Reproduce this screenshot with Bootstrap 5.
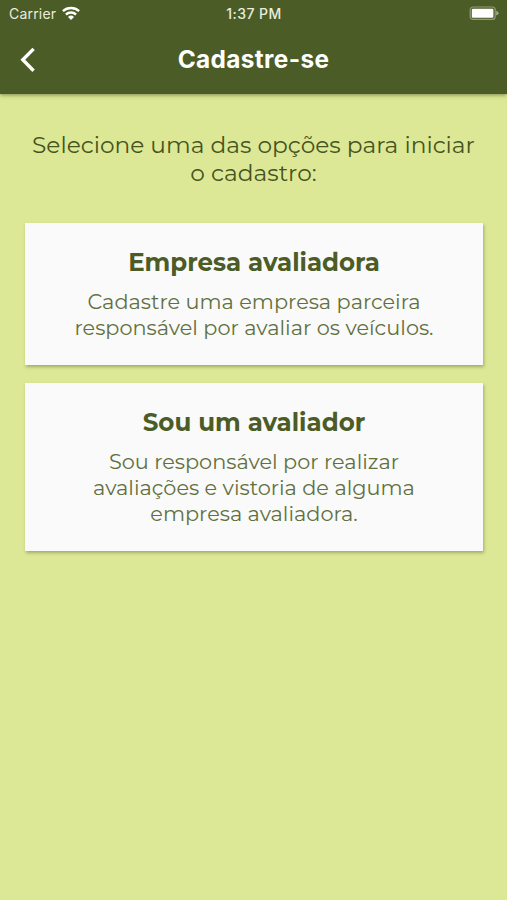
<!DOCTYPE html>
<html lang="pt-BR">
<head>
<meta charset="utf-8">
<meta name="viewport" content="width=device-width, initial-scale=1">
<title>Cadastre-se</title>
<link href="https://cdn.jsdelivr.net/npm/bootstrap@5.3.0/dist/css/bootstrap.min.css" rel="stylesheet">
<style>
  body { background: #dde896; color: #4b5c26; font-family: Montserrat, Inter, "Liberation Sans", sans-serif; overflow: hidden; }
  .app-header { height: 94px; background: #4b5c26; box-shadow: 0 1px 4px rgba(50, 60, 20, .55); }
  .status-bar { height: 28px; font: 14px/28px Inter, sans-serif; letter-spacing: .2px; color: #e9ecdf; padding: 0 8px 0 9px; }
  .status-time { font-weight: 500; letter-spacing: .45px; }
  .wifi { margin-left: 5px; }
  .title-bar { height: 64px; padding: 0 20px; }
  .side-slot { width: 40px; }
  .page-title { font: 700 24.4px/30px Inter, sans-serif; letter-spacing: .35px; color: #fff; padding-bottom: 2px; }
  .intro { font-size: 23.27px; line-height: 28px; margin: 37px 0 36px; color: #46541f; }
  .option-card { background: #fafafa; color: inherit; margin: 0 24px 18px 25px; padding: 24px 0 24px; box-shadow: 1px 2px 3px rgba(70, 85, 30, .4); }
  .option-title { font-size: 24.5px; line-height: 30px; font-weight: 700; margin: 0 0 12px; }
  .option-text { font-size: 20.82px; line-height: 26px; color: #617040; }
  .text-line { display: block; white-space: nowrap; }
</style>
</head>
<body>
<header class="app-header position-relative">
  <div class="status-bar row g-0 align-items-center">
    <div class="col d-flex align-items-center">
      <span>Carrier</span>
      <svg class="wifi" width="20" height="16" viewBox="0 0 20 16" fill="none" stroke="#fff" stroke-width="2.4">
        <path d="M1.9 5.2a12 12 0 0 1 16.2 0M4.9 8.5a7.6 7.6 0 0 1 10.2 0"/>
        <path d="M10 14l-3-3.1a4.4 4.4 0 0 1 6 0z" fill="#fff" stroke="none"/>
      </svg>
    </div>
    <div class="col-auto status-time">1:37 PM</div>
    <div class="col d-flex justify-content-end">
      <svg width="31" height="16" viewBox="0 0 31 16">
        <rect x="2.2" y="1" width="25" height="12.4" rx="3" fill="none" stroke="#929c7c" stroke-width="1.2"/>
        <rect x="3.8" y="2.8" width="21.6" height="9" rx="1.2" fill="#fff"/>
        <path d="M28.2 4.8q2.4 1 2.4 2.4t-2.4 2.4z" fill="#a0a98c"/>
      </svg>
    </div>
  </div>
  <div class="title-bar d-flex align-items-center justify-content-between">
    <div class="side-slot">
      <svg class="d-block" width="16" height="26" viewBox="0 0 16 26" fill="none" stroke="#fff" stroke-width="3.4" stroke-linejoin="miter"><path d="M13.6 1.9L2.8 12.8l10.8 10.9"/></svg>
    </div>
    <h1 class="page-title m-0">Cadastre-se</h1>
    <div class="side-slot"></div>
  </div>
</header>
<main class="text-center">
  <p class="intro"><span class="text-line">Selecione uma das opções para iniciar</span><span class="text-line">o cadastro:</span></p>
  <section class="option-card card border-0 rounded-0">
    <h2 class="option-title">Empresa avaliadora</h2>
    <p class="option-text m-0"><span class="text-line">Cadastre uma empresa parceira</span><span class="text-line">responsável por avaliar os veículos.</span></p>
  </section>
  <section class="option-card card border-0 rounded-0">
    <h2 class="option-title">Sou um avaliador</h2>
    <p class="option-text m-0"><span class="text-line">Sou responsável por realizar</span><span class="text-line">avaliações e vistoria de alguma</span><span class="text-line">empresa avaliadora.</span></p>
  </section>
</main>
<script src="https://cdn.jsdelivr.net/npm/bootstrap@5.3.0/dist/js/bootstrap.bundle.min.js"></script>
</body>
</html>
